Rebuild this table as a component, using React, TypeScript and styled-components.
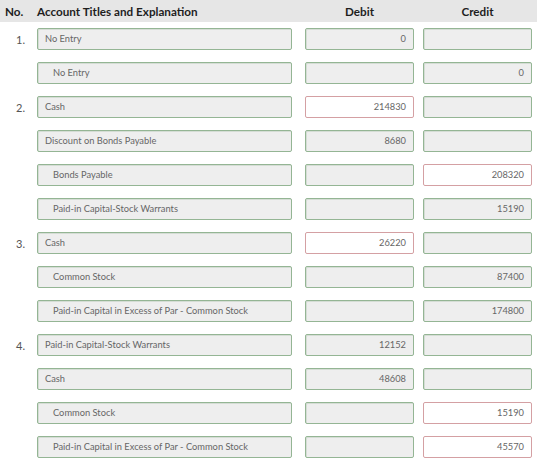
import React from 'react'
import styled, { createGlobalStyle } from 'styled-components'

const GlobalStyle = createGlobalStyle`
  body {
    margin: 0;
    background: #ffffff;
    font-family: Lato, 'Open Sans', 'Liberation Sans', sans-serif;
  }
`

const Table = styled.div`
  width: 537px;
`

const Grid = styled.div`
  display: grid;
  grid-template-columns: 37px 268px 118px 114px;
  align-items: center;
`

const Header = styled(Grid)`
  height: 22px;
  background: #e6e6e6;
  color: #1e1e1e;
  font-size: 11.7px;
  font-weight: 700;
`

const HeadCell = styled.div<{ center?: boolean }>`
  text-align: ${({ center }) => (center ? 'center' : 'left')};
  padding-left: ${({ center }) => (center ? '0' : '5px')};
  width: ${({ center }) => (center ? '109px' : 'auto')};
`

const HeadAccount = styled.div`
  padding-left: 0;
`

const Body = styled.div`
  display: flex;
  flex-direction: column;
  gap: 12px;
  padding-top: 6px;
`

const Row = styled(Grid)`
  height: 22px;
`

const Num = styled.div`
  text-align: right;
  padding-right: 12px;
  font-size: 11px;
  color: #555;
`

const Field = styled.div<{ w: number; right?: boolean; indent?: boolean; wrong?: boolean }>`
  box-sizing: border-box;
  width: ${({ w }) => w}px;
  height: 22px;
  line-height: 20px;
  border: 1px solid ${({ wrong }) => (wrong ? '#d4a0a3' : '#94b594')};
  border-radius: 2px;
  background: ${({ wrong }) => (wrong ? '#ffffff' : '#eeeeee')};
  box-shadow: ${({ wrong }) => (wrong ? 'none' : 'inset 1px 1px 0 rgba(140,170,140,0.25)')};
  font-size: 9.3px;
  color: #666;
  text-align: ${({ right }) => (right ? 'right' : 'left')};
  padding: ${({ right, indent }) => (right ? '0 7px 0 0' : indent ? '0 0 0 15px' : '0 0 0 7px')};
  white-space: nowrap;
  overflow: hidden;
`

type Entry = {
  no?: string
  account: string
  indent?: boolean
  debit?: string
  credit?: string
  debitWrong?: boolean
  creditWrong?: boolean
}

const entries: Entry[] = [
  { no: '1.', account: 'No Entry', debit: '0' },
  { account: 'No Entry', indent: true, credit: '0' },
  { no: '2.', account: 'Cash', debit: '214830', debitWrong: true },
  { account: 'Discount on Bonds Payable', debit: '8680' },
  { account: 'Bonds Payable', indent: true, credit: '208320', creditWrong: true },
  { account: 'Paid-in Capital-Stock Warrants', indent: true, credit: '15190' },
  { no: '3.', account: 'Cash', debit: '26220', debitWrong: true },
  { account: 'Common Stock', indent: true, credit: '87400' },
  { account: 'Paid-in Capital in Excess of Par - Common Stock', indent: true, credit: '174800' },
  { no: '4.', account: 'Paid-in Capital-Stock Warrants', debit: '12152' },
  { account: 'Cash', debit: '48608' },
  { account: 'Common Stock', indent: true, credit: '15190', creditWrong: true },
  { account: 'Paid-in Capital in Excess of Par - Common Stock', indent: true, credit: '45570', creditWrong: true },
]

export default function App() {
  return (
    <>
      <GlobalStyle />
      <Table>
        <Header>
          <HeadCell>No.</HeadCell>
          <HeadAccount>Account Titles and Explanation</HeadAccount>
          <HeadCell center>Debit</HeadCell>
          <HeadCell center>Credit</HeadCell>
        </Header>
        <Body>
          {entries.map((e, i) => (
            <Row key={i}>
              <Num>{e.no}</Num>
              <Field w={255} indent={e.indent}>
                {e.account}
              </Field>
              <Field w={109} right wrong={e.debitWrong}>
                {e.debit}
              </Field>
              <Field w={109} right wrong={e.creditWrong}>
                {e.credit}
              </Field>
            </Row>
          ))}
        </Body>
      </Table>
    </>
  )
}
